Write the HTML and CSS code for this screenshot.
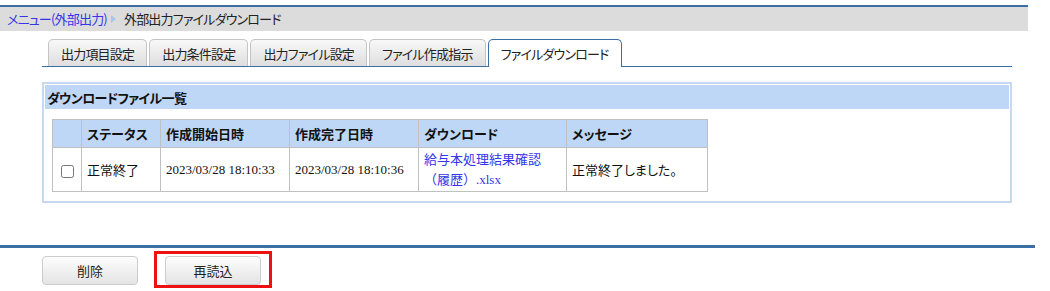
FILE: index.html
```html
<!DOCTYPE html>
<html lang="ja">

<head>
    <meta charset="UTF-8">
    <title>外部出力ファイルダウンロード</title>
    <link rel="stylesheet" href="styles.css">
</head>

<body>
    <div class="page">
        <div class="breadcrumb">
            <a href="#" class="crumb-link">メニュー(外部出力)</a>
            <span class="crumb-arrow"></span>
            <span class="crumb-current">外部出力ファイルダウンロード</span>
        </div>

        <div class="tabs">
            <div class="tab">出力項目設定</div>
            <div class="tab">出力条件設定</div>
            <div class="tab">出力ファイル設定</div>
            <div class="tab">ファイル作成指示</div>
            <div class="tab active">ファイルダウンロード</div>
        </div>

        <div class="panel">
            <div class="panel-title">ダウンロードファイル一覧</div>
            <table class="file-table">
                <thead>
                    <tr>
                        <th class="col-check"></th>
                        <th class="col-status">ステータス</th>
                        <th class="col-date">作成開始日時</th>
                        <th class="col-date">作成完了日時</th>
                        <th class="col-file">ダウンロード</th>
                        <th class="col-msg">メッセージ</th>
                    </tr>
                </thead>
                <tbody>
                    <tr>
                        <td class="col-check"><input type="checkbox"></td>
                        <td>正常終了</td>
                        <td class="serif">2023/03/28 18:10:33</td>
                        <td class="serif">2023/03/28 18:10:36</td>
                        <td class="serif file-cell"><a href="#" class="file-link">給与本処理結果確認（履歴）.xlsx</a></td>
                        <td>正常終了しました。</td>
                    </tr>
                </tbody>
            </table>
        </div>

        <div class="footer">
            <button class="btn">削除</button>
            <span class="highlight">
                <button class="btn">再読込</button>
            </span>
        </div>
    </div>
</body>

</html>
```

FILE: styles.css
```css
* {
    margin: 0;
    padding: 0;
    box-sizing: border-box;
}

body {
    font-family: "Noto Sans CJK JP", sans-serif;
    font-size: 13px;
    font-feature-settings: "palt";
    color: #222;
    background-color: white;
}

.page {
    width: 1050px;
    padding-top: 5px;
}

.breadcrumb {
    width: 1028px;
    height: 26px;
    border-top: 2px solid #3a6ea5;
    background-color: #dcdcdc;
    display: flex;
    align-items: center;
    padding-left: 7px;
    line-height: 20px;
    letter-spacing: -0.8px;
}

.crumb-link {
    color: #3434e8;
    text-decoration: none;
}

.crumb-arrow {
    width: 0;
    height: 0;
    border-top: 4px solid transparent;
    border-bottom: 4px solid transparent;
    border-left: 5px solid #a9c6ea;
    margin: 0 8px 0 4px;
}

.crumb-current {
    color: #222;
}

.tabs {
    display: flex;
    gap: 2px;
    width: 970px;
    margin: 8px 0 0 42px;
    padding-left: 6px;
    border-bottom: 1px solid #3a6ea5;
}

.tab {
    height: 27px;
    padding: 0 12px;
    display: flex;
    align-items: center;
    border: 1px solid #c4c4c4;
    border-bottom: none;
    border-radius: 5px 5px 0 0;
    background: linear-gradient(#f8f8f8, #dedede);
    color: #222;
    letter-spacing: -0.8px;
    margin-bottom: -1px;
}

.tab.active {
    background: white;
    border-color: #3a6ea5;
    position: relative;
    z-index: 1;
    height: 28px;
}

.panel {
    width: 970px;
    margin: 15px 0 0 42px;
    border: 2px solid #c6d9f1;
    padding: 1px 1px 9px 1px;
}

.panel-title {
    height: 24px;
    background-color: #bfd7f7;
    font-weight: bold;
    display: flex;
    align-items: center;
    padding-left: 2px;
    letter-spacing: -0.6px;
    color: #111;
}

.file-table {
    border-collapse: collapse;
    margin: 10px 0 0 7px;
    width: 656px;
}

.file-table th,
.file-table td {
    border: 1px solid #c0c0c0;
    text-align: left;
    padding: 0 5px;
    font-weight: normal;
    line-height: 20px;
}

.file-table th {
    background-color: #bfd7f7;
    height: 28px;
    font-weight: bold;
    color: #111;
}

.file-table td {
    height: 44px;
    color: #111;
}

.col-check {
    width: 29px;
}

.col-check input {
    width: 13px;
    height: 13px;
    margin: 3px 0 0 3px;
    display: block;
}

.col-status {
    width: 79px;
}

.col-date {
    width: 129px;
}

.col-file {
    width: 148px;
}

.serif {
    font-family: "Liberation Serif", "Noto Sans CJK JP", serif;
}

.file-cell {
    font-feature-settings: normal;
}

.file-link {
    color: #3434e8;
    text-decoration: none;
}

.footer {
    margin-top: 42px;
    width: 1035px;
    border-top: 3px solid #3a6ea5;
    padding: 3px 0 0 42px;
    display: flex;
    align-items: flex-start;
    gap: 16px;
}

.btn {
    width: 96px;
    height: 29px;
    margin-top: 5px;
    border: 1px solid #cccccc;
    border-radius: 4px;
    background: linear-gradient(#fdfdfd, #e4e4e4);
    font-family: "Noto Sans CJK JP", sans-serif;
    font-size: 13px;
    color: #222;
}

.highlight {
    display: flex;
    border: 3px solid #ee1111;
    padding: 2px 8px 0 8px;
    height: 37px;
}

.highlight .btn {
    margin-top: 0;
}
```
